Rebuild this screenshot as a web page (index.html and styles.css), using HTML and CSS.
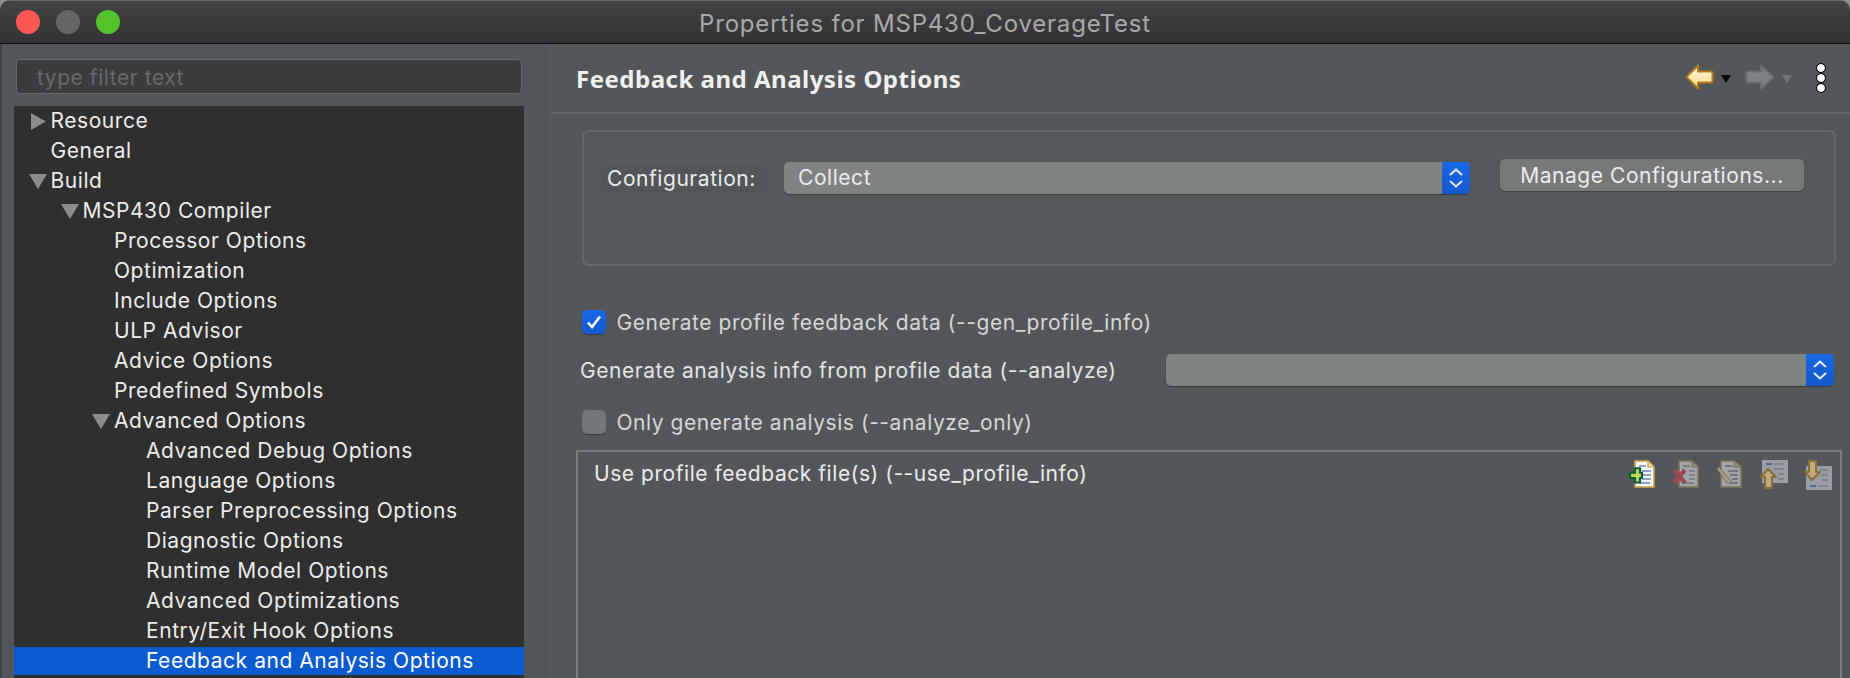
FILE: index.html
```html
<!DOCTYPE html>
<html lang="en">
<head>
<meta charset="utf-8">
<title>Properties for MSP430_CoverageTest</title>
<link rel="stylesheet" href="styles.css">
</head>
<body>
<div class="window">
  <header class="titlebar">
    <div class="lights">
      <span class="light red"></span>
      <span class="light grey"></span>
      <span class="light green"></span>
    </div>
    <div class="title">Properties for MSP430_CoverageTest</div>
  </header>
  <div class="main">
    <aside class="left">
      <div class="filter">type filter text</div>
      <div class="tree">
        <div class="row l0"><span class="twist"><svg width="18" height="17" viewBox="0 0 18 17"><path d="M2 0L17 8.5L2 17Z" fill="#8c8c8c"/></svg></span>Resource</div>
        <div class="row l0"><span class="twist"></span>General</div>
        <div class="row l0"><span class="twist"><svg width="18" height="17" viewBox="0 0 18 17"><path d="M0 1H18L9 16Z" fill="#8c8c8c"/></svg></span>Build</div>
        <div class="row l1"><span class="twist"><svg width="18" height="17" viewBox="0 0 18 17"><path d="M0 1H18L9 16Z" fill="#8c8c8c"/></svg></span>MSP430 Compiler</div>
        <div class="row l2"><span class="twist"></span>Processor Options</div>
        <div class="row l2"><span class="twist"></span>Optimization</div>
        <div class="row l2"><span class="twist"></span>Include Options</div>
        <div class="row l2"><span class="twist"></span>ULP Advisor</div>
        <div class="row l2"><span class="twist"></span>Advice Options</div>
        <div class="row l2"><span class="twist"></span>Predefined Symbols</div>
        <div class="row l2"><span class="twist"><svg width="18" height="17" viewBox="0 0 18 17"><path d="M0 1H18L9 16Z" fill="#8c8c8c"/></svg></span>Advanced Options</div>
        <div class="row l3"><span class="twist"></span>Advanced Debug Options</div>
        <div class="row l3"><span class="twist"></span>Language Options</div>
        <div class="row l3"><span class="twist"></span>Parser Preprocessing Options</div>
        <div class="row l3"><span class="twist"></span>Diagnostic Options</div>
        <div class="row l3"><span class="twist"></span>Runtime Model Options</div>
        <div class="row l3"><span class="twist"></span>Advanced Optimizations</div>
        <div class="row l3"><span class="twist"></span>Entry/Exit Hook Options</div>
        <div class="row l3 selected"><span class="twist"></span>Feedback and Analysis Options</div>
      </div>
    </aside>
    <section class="right">
      <div class="head">
        <h1 class="heading">Feedback and Analysis Options</h1>
        <div class="nav">
          <svg class="nav-arrow" width="30" height="26" viewBox="0 0 30 26"><defs><linearGradient id="bk" x1="0" y1="0" x2="0" y2="1"><stop offset="0" stop-color="#fffbe0"/><stop offset="1" stop-color="#fdd989"/></linearGradient></defs><path d="M2.5 13L14 1.5V7.5H27a1.5 1.5 0 0 1 1.5 1.500V17a1.500 1.500 0 0 1-1.500 1.500H14V24.500Z" fill="url(#bk)" stroke="#b37a1c" stroke-width="2" stroke-linejoin="round"/></svg>
          <svg class="nav-drop" width="10" height="8" viewBox="0 0 10 8"><path d="M0 0H10L5 8Z" fill="#000"/></svg>
          <svg class="nav-arrow fwd" width="30" height="26" viewBox="0 0 30 26"><path d="M28.500 13L16 1.500V7.500H3A1.500 1.500 0 0 0 1.500 9V17A1.500 1.500 0 0 0 3 18.500H16V24.500Z" fill="#7d8183" stroke="#6b6f71" stroke-width="2" stroke-linejoin="round"/></svg>
          <svg class="nav-drop" width="10" height="8" viewBox="0 0 10 8"><path d="M0 0H10L5 8Z" fill="#73777a"/></svg>
          <div class="dots"><span></span><span></span><span></span></div>
        </div>
      </div>
      <div class="content">
        <div class="group">
          <div class="cfg-label">Configuration:</div>
          <div class="combo cfg-combo">
            <span class="combo-text">Collect</span>
            <span class="stepper"><svg width="14" height="20" viewBox="0 0 14 20"><path d="M1 7L7 1.500L13 7M1 13L7 18.500L13 13" fill="none" stroke="#e6ecf8" stroke-width="2"/></svg></span>
          </div>
          <div class="button">Manage Configurations...</div>
        </div>
        <label class="check first"><span class="box on"><svg width="16" height="14" viewBox="0 0 16 14"><path d="M2 7.500L6 12L14 1.500" fill="none" stroke="#fff" stroke-width="2.600"/></svg></span>Generate profile feedback data (--gen_profile_info)</label>
        <div class="analyze">
          <span class="analyze-label">Generate analysis info from profile data (--analyze)</span>
          <div class="combo analyze-combo">
            <span class="combo-text"></span>
            <span class="stepper"><svg width="14" height="20" viewBox="0 0 14 20"><path d="M1 7L7 1.500L13 7M1 13L7 18.500L13 13" fill="none" stroke="#e6ecf8" stroke-width="2"/></svg></span>
          </div>
        </div>
        <label class="check second"><span class="box"></span>Only generate analysis (--analyze_only)</label>
        <div class="files">
          <span class="files-label">Use profile feedback file(s) (--use_profile_info)</span>
          <div class="tools">
            <svg class="tool" width="28" height="30" viewBox="0 0 28 30"><path d="M7 1H20L26 7V27H7Z" fill="#f4f6fb" stroke="#c9a24a" stroke-width="1.600"/><path d="M20 1V7H26" fill="#e8d9a8" stroke="#c9a24a" stroke-width="1.200"/><path d="M11 6H18M14 11H23M14 15H23M14 19H23M11 23H22" stroke="#8da2c4" stroke-width="1.800"/><path d="M7 8V13H2V19H7V24H12V19H14V13H12V8Z" fill="#c6d85a" stroke="#0c5f32" stroke-width="2.200" stroke-linejoin="round" transform="translate(0 1) scale(1 .9)"/></svg>
            <svg class="tool dim" width="28" height="30" viewBox="0 0 28 30"><path d="M7 1H20L26 7V27H7Z" fill="#a2a6ab" stroke="#7f7358" stroke-width="1.600"/><path d="M20 1V7H26" fill="#8e8a78" stroke="#7f7358" stroke-width="1.200"/><path d="M11 6H18M17 11H23M17 15H23M17 19H23M11 23H22" stroke="#7b8188" stroke-width="1.800"/><path d="M2 10L13 23M13 10L2 23" stroke="#9c4852" stroke-width="4.500"/></svg>
            <svg class="tool dim" width="28" height="30" viewBox="0 0 28 30"><path d="M5 1H18L25 7V27H5Z" fill="#a2a6ab" stroke="#7f7358" stroke-width="1.600"/><path d="M18 1V7H25" fill="#8e8a78" stroke="#7f7358" stroke-width="1.200"/><path d="M9 6H16M12 11H22M14 15H22M16 19H22M14 23H22" stroke="#6f767e" stroke-width="1.800"/><path d="M1 9L3 7L15 21L14 24L11 23Z" fill="#a39c8a" stroke="#7f7358"/></svg>
            <svg class="tool dim" width="28" height="30" viewBox="0 0 28 30"><path d="M2 0H28V23H2Z" fill="#9a9ea4"/><path d="M6 4H12" stroke="#4e6b92" stroke-width="2"/><path d="M14 4H24M14 9H24M18 14H24M18 19H24" stroke="#7d838a" stroke-width="1.800"/><path d="M8 9L16 17H12V28H5V17H1Z" fill="#c2ab7a" stroke="#8a6e3a" stroke-width="2" stroke-linejoin="round"/></svg>
            <svg class="tool dim" width="28" height="30" viewBox="0 0 28 30"><path d="M2 6H28V30H2Z" fill="#9a9ea4"/><path d="M6 26H12" stroke="#4e6b92" stroke-width="2"/><path d="M16 10H24M18 15H24M18 20H24M14 26H24" stroke="#7d838a" stroke-width="1.800"/><path d="M8 20L16 12H12V1H5V12H1Z" fill="#c2ab7a" stroke="#8a6e3a" stroke-width="2" stroke-linejoin="round"/></svg>
          </div>
        </div>
      </div>
    </section>
  </div>
</div>
</body>
</html>
```

FILE: styles.css
```css
* { box-sizing: border-box; }
html, body { margin: 0; height: 100%; }
body {
  background: #8f8f8f;
  font-family: Inter, "Noto Sans", sans-serif;
  font-size: 21px;
  letter-spacing: 0.55px;
  color: #e8e8e8;
  overflow: hidden;
}
.window {
  height: 678px;
  display: flex;
  flex-direction: column;
  border-radius: 10px 10px 0 0;
  overflow: hidden;
}
.titlebar {
  flex: none;
  height: 44px;
  display: flex;
  align-items: center;
  position: relative;
  background: linear-gradient(#424244, #333335);
  border-top: 1px solid #68686a;
  border-bottom: 1px solid #0c0c0c;
}
.lights {
  display: flex;
  gap: 16px;
  padding-left: 16px;
  margin-top: -1px;
}
.light { width: 24px; height: 24px; border-radius: 50%; }
.red { background: #fc5753; }
.grey { background: #656567; }
.green { background: #53c22b; }
.title {
  position: absolute;
  left: 0;
  right: 0;
  top: 8px;
  text-align: center;
  color: #a9a9aa;
  font-size: 24px;
  letter-spacing: 0.8px;
  line-height: 30px;
}
.main { flex: 1; display: flex; min-height: 0; }
.left {
  flex: none;
  width: 551px;
  padding: 15px 28px 0 14px;
  background: #50565a;
  border-left: 2px solid #3f4244;
  border-right: 1px solid #5a5f61;
  display: flex;
  flex-direction: column;
}
.filter {
  flex: none;
  height: 35px;
  margin: 0 0 12px 0;
  padding-left: 20px;
  line-height: 36px;
  background: #3a3c3d;
  border: 1px solid #65696b;
  border-radius: 4px;
  color: #666a6b;
}
.tree {
  flex: 1;
  margin: 0 -2px;
  background: #2f2f2f;
  overflow: hidden;
}
.row {
  height: 30px;
  display: flex;
  align-items: center;
  white-space: nowrap;
  color: #ececec;
  line-height: 26px;
}
.l0 { padding-left: 14.500px; }
.l1 { padding-left: 46.500px; }
.l2 { padding-left: 78px; }
.l3 { padding-left: 110px; }
.twist { flex: none; width: 22px; height: 17px; display: block; }
.twist svg { display: block; }
.selected {
  height: 28px;
  margin-top: 1px;
  background: #0a5ad0;
  color: #fff;
}
.right {
  flex: 1;
  min-width: 0;
  display: flex;
  flex-direction: column;
  background: #53575a;
}
.head {
  flex: none;
  height: 70px;
  display: flex;
  align-items: center;
  justify-content: space-between;
  padding: 0 25px;
  border-bottom: 2px solid #5f6466;
}
.heading {
  margin: 0;
  font-family: "Noto Sans", Inter, sans-serif;
  font-size: 24px;
  letter-spacing: 0.5px;
  font-weight: 700;
  color: #f0f0f0;
}
.nav { display: flex; align-items: center; }
.nav-arrow { display: block; margin-top: -2px; }
.nav-drop { display: block; margin: 2px 0 0 7px; }
.fwd { margin-left: 14px; }
.dots {
  display: flex;
  flex-direction: column;
  gap: 2px;
  margin-left: 25px;
}
.dots span {
  display: block;
  width: 8px;
  height: 8px;
  border-radius: 50%;
  background: #fff;
  outline: 1px solid #000;
}
.content {
  flex: 1;
  min-height: 0;
  display: flex;
  flex-direction: column;
  padding: 16px 8px 0 25px;
}
.group {
  flex: none;
  height: 136px;
  margin: 0 6px;
  padding: 27px 30px 0 18px;
  display: flex;
  align-items: flex-start;
  background: #55595b;
  border: 2px solid #63686a;
  border-radius: 7px;
}
.cfg-label {
  flex: none;
  width: 164px;
  height: 28px;
  margin-top: 6px;
  padding-left: 5px;
  line-height: 28px;
  background: #515659;
  color: #ececec;
}
.combo {
  display: flex;
  align-items: stretch;
  height: 32px;
  background: #808384;
  border-radius: 5px;
  box-shadow: 0 1px 1px rgba(0,0,0,.35);
  overflow: hidden;
}
.cfg-combo { flex: 1; min-width: 0; margin: 3px 30px 0 18px; }
.combo-text { flex: 1; padding-left: 14px; line-height: 32px; color: #ececec; }
.stepper {
  flex: none;
  width: 28px;
  display: flex;
  align-items: center;
  justify-content: center;
  background: linear-gradient(#1a68e6, #1558cc);
}
.button {
  flex: none;
  width: 304px;
  height: 32px;
  text-align: center;
  line-height: 34px;
  background: #76797a;
  border-radius: 5px;
  box-shadow: 0 1px 1px rgba(0,0,0,.3);
  color: #ececec;
}
.check {
  display: flex;
  align-items: center;
  height: 24px;
  margin-left: 6px;
  color: #d6d6d6;
}
.first { margin-top: 44px; }
.second { margin-top: 24px; }
.box {
  flex: none;
  width: 24px;
  height: 24px;
  margin-right: 10.500px;
  border-radius: 5px;
  background: #737678;
  box-shadow: 0 1px 1px rgba(0,0,0,.35);
  display: flex;
  align-items: center;
  justify-content: center;
}
.on { background: linear-gradient(#1a68e6, #1558cc); }
.analyze {
  display: flex;
  align-items: center;
  height: 32px;
  margin-top: 20px;
  margin-left: 4px;
}
.analyze-label { flex: none; width: 586px; color: #e4e4e4; white-space: nowrap; }
.analyze-combo { flex: 1; margin-right: 8px; }
.files {
  flex: 1;
  min-height: 0;
  margin-top: 16px;
  padding: 9px 0 0 16px;
  display: flex;
  justify-content: space-between;
  align-items: flex-start;
  border: 2px solid #7a7d7e;
  border-bottom: 0;
}
.files-label { color: #ececec; line-height: 26px; }
.tools { display: flex; gap: 16px; margin: -1px 8px 0 0; }
.tool { display: block; flex: none; filter: blur(0.4px); }
.dim { filter: blur(0.7px); }
```
